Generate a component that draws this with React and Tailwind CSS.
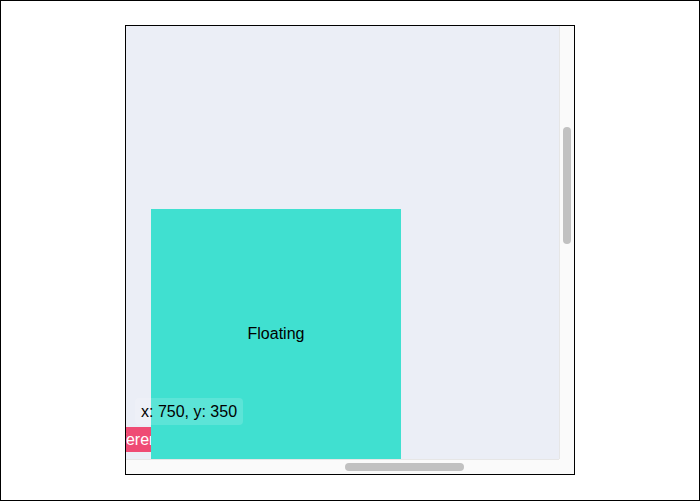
import React from 'react';

const font = { fontFamily: '"Liberation Sans", Arial, sans-serif' };

const App = () => {
  return (
    <div
      className="w-[700px] h-[501px] border border-black bg-white flex items-start justify-center pt-[24px]"
      style={font}
    >
      {/* scroll box */}
      <div className="w-[450px] h-[450px] border border-black flex flex-col bg-[#fafafa]">
        <div className="flex flex-1 min-h-0">
          {/* canvas */}
          <div className="relative w-[433px] h-[433px] overflow-hidden bg-[#ebeef6]">
            {/* reference */}
            <div className="absolute left-[-29px] top-[401px] h-[25px] w-[90px] bg-[#ef4b74] text-white text-[16px] leading-[25px] pl-[4px]">
              Reference
            </div>

            {/* floating */}
            <div className="absolute left-[25px] top-[183px] w-[250px] h-[250px] bg-[#40e0d0] flex items-center justify-center text-[16px] text-black">
              Floating
            </div>

            {/* coords tooltip */}
            <div className="absolute left-[9px] top-[372px] h-[27px] px-[6px] rounded-[4px] bg-white/15 text-[16px] leading-[27px] text-black whitespace-nowrap">
              x: 750, y: 350
            </div>
          </div>

          {/* vertical scrollbar */}
          <div className="w-[15px] border-l border-[#e6e6e6] bg-[#fafafa] flex flex-col pt-[101px] items-center">
            <div className="w-[8px] h-[117px] rounded-full bg-[#c1c1c1]" />
          </div>
        </div>

        {/* horizontal scrollbar */}
        <div className="h-[15px] flex">
          <div className="w-[433px] border-t border-[#e6e6e6] bg-[#fafafa] flex items-center pl-[219px]">
            <div className="w-[119px] h-[8px] rounded-full bg-[#c1c1c1]" />
          </div>
          <div className="w-[15px] bg-[#fafafa]" />
        </div>
      </div>
    </div>
  );
};

export default App;
